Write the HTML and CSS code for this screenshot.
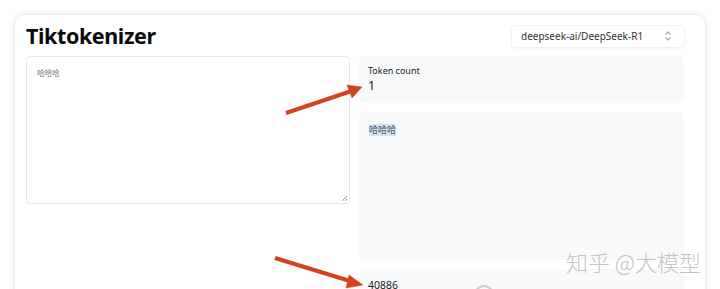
FILE: index.html
```html
<!DOCTYPE html>
<html lang="zh-CN">
<head>
    <meta charset="UTF-8">
    <meta name="viewport" content="width=device-width, initial-scale=1.0">
    <title>Tiktokenizer</title>
    <link rel="stylesheet" href="styles.css">
</head>
<body>
    <div class="card">
        <div class="header">
            <h1>Tiktokenizer</h1>
            <div class="select">
                <span>deepseek-ai/DeepSeek-R1</span>
                <svg class="chev" width="8" height="10" viewBox="0 0 8 10">
                    <path d="M1.5 3.5 L4 1 L6.5 3.5 M1.5 6.5 L4 9 L6.5 6.5" fill="none" stroke="#9ca3af" stroke-width="1.1"/>
                </svg>
            </div>
        </div>
        <div class="grid">
            <div class="left">
                <div class="textarea">哈哈哈<span class="grip"></span></div>
            </div>
            <div class="right">
                <div class="box count">
                    <div class="label">Token count</div>
                    <div class="value">1</div>
                </div>
                <div class="box tokens">
                    <span class="tok">哈哈哈</span>
                </div>
                <div class="box ids">
                    <span>40886</span>
                    <span class="ring"></span>
                </div>
            </div>
        </div>
    </div>

    <!-- annotation arrows -->
    <svg class="arrows" width="720" height="289" viewBox="0 0 720 289">
        <g fill="#d5431c" stroke="#d5431c">
            <line x1="286" y1="113" x2="350" y2="91.5" stroke-width="4"/>
            <polygon points="362,87 347,85 352,98" stroke-width="0.5"/>
            <line x1="275" y1="258" x2="350" y2="281" stroke-width="4"/>
            <polygon points="363,285 349,275 346,288" stroke-width="0.5"/>
        </g>
    </svg>

    <div class="watermark">知乎 @大模型</div>
</body>
</html>
```

FILE: styles.css
```css
body {
    margin: 0;
    background: #fff;
    font-family: "Noto Sans", "Open Sans", "Noto Sans CJK SC", sans-serif;
    color: #111;
    overflow: hidden;
    height: 289px;
    position: relative;
}
.card {
    margin: 15px 15px 0 15px;
    width: 690px;
    box-sizing: border-box;
    padding: 9px 20px 0 11px;
    background: #fff;
    border-radius: 10px;
    box-shadow: 0 0 6px rgba(0, 0, 0, 0.16);
    height: 300px;
}
.header {
    display: flex;
    justify-content: space-between;
    align-items: center;
    height: 24px;
    margin-bottom: 8px;
}
h1 {
    margin: 0;
    font-size: 21.5px;
    font-weight: 700;
    letter-spacing: -0.4px;
    line-height: 24px;
    color: #0a0a0a;
}
.select {
    width: 174px;
    height: 23px;
    box-sizing: border-box;
    display: flex;
    align-items: center;
    justify-content: space-between;
    padding: 0 12px 0 9px;
    border: 1px solid #f0f1f3;
    border-radius: 5px;
    box-shadow: 0 1px 2px rgba(0, 0, 0, 0.04);
    font-size: 10px;
    color: #333;
}
.grid {
    display: grid;
    grid-template-columns: 324px 325px;
    gap: 9px;
}
.textarea {
    position: relative;
    height: 148px;
    box-sizing: border-box;
    border: 1px solid #e6e7ea;
    border-radius: 4px;
    padding: 10px 10px;
    font-size: 7.5px;
    color: #777;
    font-family: "Noto Sans CJK SC", sans-serif;
}
.grip {
    position: absolute;
    right: 2px;
    bottom: 2px;
    width: 5px;
    height: 5px;
    background: linear-gradient(135deg, transparent 45%, #999 45%, #999 55%, transparent 55%, transparent 70%, #999 70%, #999 80%, transparent 80%);
}
.right {
    display: flex;
    flex-direction: column;
    gap: 9px;
}
.box {
    background: #f8f9fb;
    border-radius: 5px;
    box-sizing: border-box;
}
.count {
    height: 47px;
    padding: 9px 9px;
}
.label {
    font-size: 9px;
    line-height: 12px;
    color: #222;
}
.value {
    font-size: 12.5px;
    line-height: 17px;
    color: #222;
}
.tokens {
    height: 148px;
    padding: 12px 10px;
    font-size: 9px;
    line-height: 12px;
}
.tok {
    font-family: "Noto Sans CJK SC", sans-serif;
    font-size: 9px;
    line-height: 12px;
    background: #cfe4f6;
    color: #556;
    display: inline-block;
    vertical-align: top;
}
.ids {
    height: 60px;
    padding: 9px 9px;
    display: flex;
    align-items: flex-start;
    font-size: 10.5px;
    color: #222;
}
.ring {
    width: 16px;
    height: 16px;
    border: 2px solid #c9cbcf;
    border-radius: 50%;
    margin: 7px 0 0 76px;
}
.arrows {
    position: absolute;
    left: 0;
    top: 0;
    pointer-events: none;
}
.watermark {
    position: absolute;
    left: 566px;
    top: 245px;
    font-family: "Noto Sans CJK SC", sans-serif;
    font-size: 22px;
    font-weight: 300;
    color: #c4c4c4;
    text-shadow: 0 0 1px #fff;
    white-space: nowrap;
}
```
